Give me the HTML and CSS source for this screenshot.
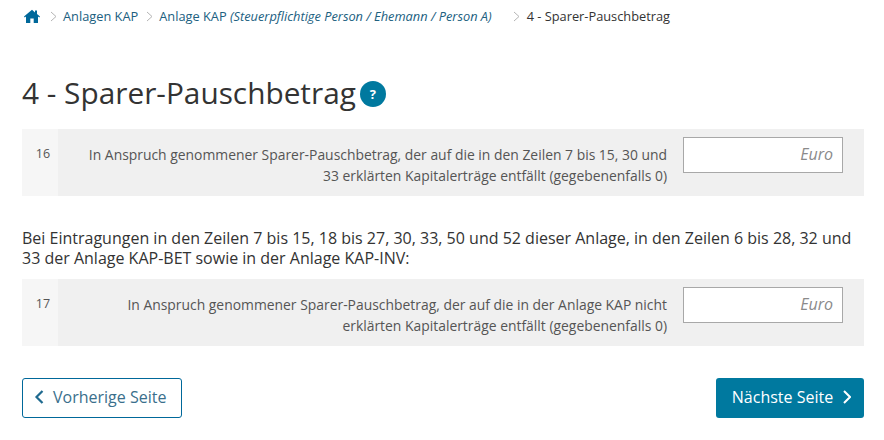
FILE: index.html
```html
<!DOCTYPE html>
<html lang="de">
<head>
    <meta charset="UTF-8">
    <meta name="viewport" content="width=device-width, initial-scale=1.0">
    <title>4 - Sparer-Pauschbetrag</title>
    <link rel="stylesheet" href="styles.css">
</head>
<body>
    <nav class="breadcrumb">
        <a class="home" href="#">
            <svg width="16" height="14" viewBox="0 0 16 14"><path d="M8 .8 0 7.6l.7.9L2 7.5V14h4.3V9.4h3.4V14H14V7.5l1.3 1 .7-.9-3-2.5V1.400h-2v2L8 .8z" fill="#00689a"/></svg>
        </a>
        <span class="sep"><svg width="7" height="11" viewBox="0 0 7 11"><path d="M1 1l5 4.500-5 4.500" fill="none" stroke="#b5b5b5"/></svg></span>
        <a href="#">Anlagen KAP</a>
        <span class="sep"><svg width="7" height="11" viewBox="0 0 7 11"><path d="M1 1l5 4.500-5 4.500" fill="none" stroke="#b5b5b5"/></svg></span>
        <a href="#">Anlage KAP <em>(Steuerpflichtige Person / Ehemann / Person A)</em></a>
        <span class="sep sep-last"><svg width="7" height="11" viewBox="0 0 7 11"><path d="M1 1l5 4.500-5 4.500" fill="none" stroke="#b5b5b5"/></svg></span>
        <span class="aktuell">4 - Sparer-Pauschbetrag</span>
    </nav>

    <h1 class="titel">4 - Sparer-Pauschbetrag<span class="hilfe">?</span></h1>

    <div class="zeile">
        <div class="nummer">16</div>
        <div class="inhalt">
            <label class="text" for="z16">In Anspruch genommener Sparer-Pauschbetrag, der auf die in den Zeilen 7 bis 15, 30 und 33 erklärten Kapitalerträge entfällt (gegebenenfalls 0)</label>
            <input class="feld" id="z16" type="text" placeholder="Euro">
        </div>
    </div>

    <p class="hinweis">Bei Eintragungen in den Zeilen 7 bis 15, 18 bis 27, 30, 33, 50 und 52 dieser Anlage, in den Zeilen 6 bis 28, 32 und 33 der Anlage KAP-BET sowie in der Anlage KAP-INV:</p>

    <div class="zeile">
        <div class="nummer">17</div>
        <div class="inhalt">
            <label class="text" for="z17">In Anspruch genommener Sparer-Pauschbetrag, der auf die in der Anlage KAP nicht erklärten Kapitalerträge entfällt (gegebenenfalls 0)</label>
            <input class="feld" id="z17" type="text" placeholder="Euro">
        </div>
    </div>

    <div class="navigation">
        <a class="knopf zurueck" href="#">
            <svg width="10" height="14" viewBox="0 0 10 14"><path d="M8.500 1 2.500 7l6 6" fill="none" stroke="currentColor" stroke-width="2.200"/></svg>
            Vorherige Seite
        </a>
        <a class="knopf weiter" href="#">
            Nächste Seite
            <svg width="8" height="14" viewBox="0 0 8 14"><path d="M1 1l6 6-6 6" fill="none" stroke="currentColor" stroke-width="2"/></svg>
        </a>
    </div>
</body>
</html>
```

FILE: styles.css
```css
body {
    margin: 0;
    padding: 0 20px 0 22px;
    background-color: #ffffff;
    color: #333333;
    font-family: "Open Sans", sans-serif;
    font-size: 14px;
    overflow: hidden;
}
a {
    color: #20607f;
    text-decoration: none;
}
.breadcrumb {
    display: flex;
    align-items: center;
    height: 16px;
    padding: 8px 0 0 2px;
    font-size: 12.800px;
    line-height: 14px;
    white-space: nowrap;
}
.home {
    display: flex;
    margin-right: 2px;
}
.sep {
    display: flex;
    margin: 0 6px 0 8px;
}
.sep-last {
    margin: 0 7px 0 21px;
}
.aktuell {
    color: #333333;
}
.titel {
    display: flex;
    align-items: center;
    gap: 4px;
    margin: 46px 0 0;
    height: 44px;
    font-size: 29.800px;
    font-weight: 400;
    white-space: pre;
}
.hilfe {
    display: flex;
    justify-content: center;
    align-items: center;
    width: 26px;
    height: 26px;
    margin-top: 3px;
    border-radius: 50%;
    background: #00799f;
    color: #ffffff;
    font-size: 13px;
    font-weight: 700;
}
.zeile {
    display: flex;
    background: #f6f6f6;
    height: 67px;
}
.titel + .zeile {
    margin-top: 15px;
}
.nummer {
    flex: 0 0 36px;
    padding: 16px 0 0 6px;
    box-sizing: border-box;
    text-align: center;
    font-size: 12.500px;
    color: #555555;
}
.inhalt {
    flex: 1;
    display: flex;
    justify-content: flex-end;
    background: #f0f0f0;
    padding: 8px 21px 0 0;
}
.text {
    flex: 1;
    padding: 7px 16px 0 24px;
    text-align: right;
    font-size: 13.900px;
    line-height: 21px;
    color: #555555;
}
.feld {
    box-sizing: border-box;
    width: 160px;
    height: 36px;
    padding: 0 9px 2px;
    border: 1px solid #a8a8a8;
    background: #ffffff;
    text-align: right;
    font-family: "Open Sans", sans-serif;
    font-size: 16px;
    font-style: italic;
}
.feld::placeholder {
    color: #8a8a8a;
    opacity: 1;
}
.hinweis {
    margin: 32px 0 11px;
    font-size: 16px;
    line-height: 20px;
}
.navigation {
    display: flex;
    justify-content: space-between;
    margin-top: 32px;
}
.knopf {
    display: flex;
    align-items: center;
    box-sizing: border-box;
    height: 40px;
    padding-bottom: 2px;
    border-radius: 3px;
    font-size: 16px;
}
.zurueck {
    gap: 9px;
    width: 160px;
    padding-left: 11px;
    border: 1px solid #00689a;
    color: #3a6f8c;
}
.zurueck svg {
    color: #1f6a8f;
}
.weiter {
    gap: 10px;
    justify-content: center;
    width: 148px;
    padding-left: 3px;
    background: #00799f;
    color: #ffffff;
}
```
